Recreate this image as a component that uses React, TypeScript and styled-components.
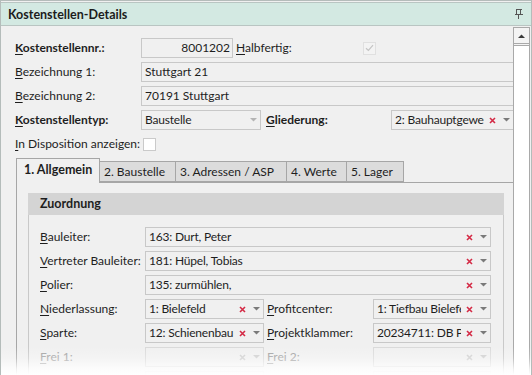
import React from 'react'
import styled, { createGlobalStyle } from 'styled-components'

const GlobalStyle = createGlobalStyle`
  body {
    margin: 0;
    background: #ffffff;
    font-family: Lato, "Noto Sans", "Liberation Sans", sans-serif;
    font-size: 12px;
    color: #1e1e1e;
  }
`

const Panel = styled.div`
  position: relative;
  width: 532px;
  height: 375px;
  box-sizing: border-box;
  border: 1px solid #b4bcba;
  border-bottom: none;
  display: flex;
  flex-direction: column;
  overflow: hidden;
  background: #f0f0f0;
`

const Header = styled.div`
  height: 24px;
  margin-top: 1px;
  flex-shrink: 0;
  box-sizing: border-box;
  background: #d3e9e2;
  border-top: 1px solid #b9c5c2;
  border-bottom: 1px solid #b9c5c2;
  display: flex;
  align-items: center;
  justify-content: space-between;
  padding: 0 8px 0 7px;
`

const Title = styled.div`
  font-weight: 700;
  font-size: 12.5px;
  color: #1c1c1c;
`

const Body = styled.div`
  flex: 1;
  display: flex;
  min-height: 0;
`

const Content = styled.div`
  flex: 1;
  min-width: 0;
  overflow: hidden;
  padding: 12px 0 0 14px;
`

const Scrollbar = styled.div`
  width: 17px;
  margin: 1px 1px 0 0;
  box-sizing: border-box;
  border: 1px solid #a9a9a9;
  border-bottom: none;
  background: #ffffff;
  display: flex;
  flex-direction: column;
`

const ScrollButton = styled.div`
  height: 15px;
  border-bottom: 3px double #a9a9a9;
  background: #f4f4f4;
  display: flex;
  align-items: center;
  justify-content: center;
`

const Row = styled.div<{ $gap?: number }>`
  display: flex;
  align-items: center;
  height: 20px;
  margin-bottom: ${p => p.$gap ?? 4}px;
`

const Label = styled.div<{ $w: number; $bold?: boolean; $disabled?: boolean; $ml?: number }>`
  width: ${p => p.$w}px;
  flex-shrink: 0;
  margin-left: ${p => p.$ml ?? 0}px;
  font-weight: ${p => (p.$bold ? 700 : 400)};
  color: ${p => (p.$disabled ? '#a0a0a0' : '#1e1e1e')};
  white-space: nowrap;
  line-height: 20px;
`

const Key = styled.span`
  text-decoration: underline;
  text-underline-offset: 2px;
`

const Field = styled.div<{ $w?: number; $right?: boolean }>`
  ${p => (p.$w ? `width: ${p.$w}px; flex-shrink: 0;` : 'flex: 1; min-width: 0; margin-right: -3px;')}
  height: 20px;
  box-sizing: border-box;
  border: 1px solid #c8c8c8;
  background: #f0f0f0;
  padding: 0 2px 0 3px;
  line-height: 18px;
  text-align: ${p => (p.$right ? 'right' : 'left')};
  white-space: nowrap;
  overflow: hidden;
`

const ComboBox = styled.div<{ $w?: number; $disabled?: boolean; $bleed?: boolean }>`
  ${p => (p.$w ? `width: ${p.$w}px; flex-shrink: 0;` : 'flex: 1; min-width: 0;')}
  margin-right: ${p => (p.$bleed ? -1 : 0)}px;
  height: 20px;
  box-sizing: border-box;
  border: 1px solid ${p => (p.$disabled ? '#dadada' : '#c8c8c8')};
  background: #f0f0f0;
  display: flex;
  align-items: center;
  padding: 0 0 0 3px;
`

const ComboText = styled.div`
  flex: 1;
  min-width: 0;
  overflow: hidden;
  white-space: nowrap;
  line-height: 18px;
  letter-spacing: -0.2px;
`

const IconSlot = styled.div<{ $w: number }>`
  width: ${p => p.$w}px;
  flex-shrink: 0;
  display: flex;
  align-items: center;
  justify-content: center;
`

const CheckBox = styled.div<{ $disabled?: boolean; $ml?: number }>`
  width: 13px;
  height: 13px;
  margin-left: ${p => p.$ml ?? 0}px;
  box-sizing: border-box;
  border: 1px solid ${p => (p.$disabled ? '#e0e0e0' : '#cacaca')};
  background: ${p => (p.$disabled ? '#f3f3f3' : '#ffffff')};
  display: flex;
  align-items: center;
  justify-content: center;
`

const TabStrip = styled.div`
  display: flex;
  align-items: flex-end;
  height: 24px;
  margin-left: 1px;
`

const Tab = styled.div<{ $active?: boolean; $w: number }>`
  position: relative;
  width: ${p => p.$w}px;
  box-sizing: border-box;
  height: ${p => (p.$active ? 25 : 21)}px;
  margin-bottom: ${p => (p.$active ? -1 : 0)}px;
  margin-left: ${p => (p.$active ? 0 : -1)}px;
  z-index: ${p => (p.$active ? 1 : 0)};
  border: 1px solid #a6a6a6;
  border-bottom: ${p => (p.$active ? 'none' : '1px solid #a6a6a6')};
  background: ${p => (p.$active ? '#f0f0f0' : '#dcdcdc')};
  font-weight: ${p => (p.$active ? 700 : 400)};
  font-size: ${p => (p.$active ? 12.5 : 12)}px;
  padding-left: ${p => (p.$active ? 7 : 4)}px;
  line-height: ${p => (p.$active ? 22 : 19)}px;
  white-space: nowrap;
  &:first-child { margin-left: 0; }
`

const TabPanel = styled.div`
  margin-left: 1px;
  margin-right: -4px;
  border: 1px solid #a6a6a6;
  border-bottom: none;
  padding: 10px 11px 0 11px;
  height: 300px;
`

const Group = styled.div`
  width: 476px;
  box-sizing: border-box;
  border: 1px solid #c9c9c9;
  border-top: none;
`

const GroupHeader = styled.div`
  height: 22px;
  margin: 0 -1px;
  background: #d4d4d4;
  font-weight: 700;
  font-size: 12.5px;
  line-height: 21px;
  padding-left: 12px;
`

const GroupBody = styled.div`
  padding: 12px 12px 0 11px;
`

const Fade = styled.div`
  position: absolute;
  left: 0;
  right: 0;
  bottom: 0;
  height: 28px;
  pointer-events: none;
  background: linear-gradient(
    to bottom,
    rgba(255, 255, 255, 0) 0%,
    rgba(255, 255, 255, 0.25) 40%,
    rgba(255, 255, 255, 0.8) 78%,
    rgba(255, 255, 255, 1) 100%
  );
`

const Pin = () => (
  <svg width="9" height="10" viewBox="0 0 9 10">
    <g stroke="#555" strokeWidth="1" fill="none" shapeRendering="crispEdges">
      <line x1="1.5" y1="0.5" x2="7.5" y2="0.5" />
      <line x1="2.5" y1="0.5" x2="2.5" y2="5.5" />
      <line x1="6.5" y1="0.5" x2="6.5" y2="5.5" />
      <line x1="0.5" y1="5.5" x2="8.5" y2="5.5" />
      <line x1="4.5" y1="5.5" x2="4.5" y2="9.5" />
    </g>
  </svg>
)

const ClearX = ({ disabled }: { disabled?: boolean }) => (
  <svg width="7" height="7" viewBox="0 0 7 7">
    <path d="M1 1 L6 6 M6 1 L1 6" stroke={disabled ? '#cfcfcf' : '#d42a45'} strokeWidth="1.6" />
  </svg>
)

const Arrow = ({ color = '#7a7a7a' }: { color?: string }) => (
  <svg width="7" height="4" viewBox="0 0 7 4">
    <path d="M0 0 H7 L3.5 3.5 Z" fill={color} />
  </svg>
)

const UpArrow = () => (
  <svg width="7" height="4" viewBox="0 0 7 4">
    <path d="M0 4 H7 L3.5 0.5 Z" fill="#3a3a3a" />
  </svg>
)

const Check = () => (
  <svg width="9" height="8" viewBox="0 0 9 8">
    <path d="M1 4.2 L3.4 6.5 L8 1.2" stroke="#c4c4c4" strokeWidth="1.2" fill="none" />
  </svg>
)

type ComboProps = { value?: string; w?: number; disabled?: boolean; clear?: boolean; bleed?: boolean }

const Combo = ({ value = '', w, disabled, clear = true, bleed }: ComboProps) => (
  <ComboBox $w={w} $disabled={disabled} $bleed={bleed}>
    <ComboText>{value}</ComboText>
    {clear && (
      <IconSlot $w={16}>
        <ClearX disabled={disabled} />
      </IconSlot>
    )}
    <IconSlot $w={13}>
      <Arrow color={disabled ? '#cfcfcf' : clear ? '#7a7a7a' : '#b4b4b4'} />
    </IconSlot>
  </ComboBox>
)

const tabs = [
  { label: '1. Allgemein', w: 84 },
  { label: '2. Baustelle', w: 77 },
  { label: '3. Adressen / ASP', w: 112 },
  { label: '4. Werte', w: 61 },
  { label: '5. Lager', w: 58 },
]

export default function App() {
  return (
    <>
      <GlobalStyle />
      <Panel>
        <Header>
          <Title>Kostenstellen-Details</Title>
          <Pin />
        </Header>
        <Body>
          <Content>
            <Row>
              <Label $w={126} $bold><Key>K</Key>ostenstellennr.:</Label>
              <Field $w={92} $right>8001202</Field>
              <Label $w={127} $ml={3}><Key>H</Key>albfertig:</Label>
              <CheckBox $disabled>
                <Check />
              </CheckBox>
            </Row>
            <Row>
              <Label $w={126}><Key>B</Key>ezeichnung 1:</Label>
              <Field>Stuttgart 21</Field>
            </Row>
            <Row>
              <Label $w={126}><Key>B</Key>ezeichnung 2:</Label>
              <Field>70191 Stuttgart</Field>
            </Row>
            <Row>
              <Label $w={126} $bold><Key>K</Key>ostenstellentyp:</Label>
              <Combo value="Baustelle" w={120} clear={false} />
              <Label $w={125} $ml={5} $bold><Key>G</Key>liederung:</Label>
              <Combo value="2: Bauhauptgewerbe" bleed />
            </Row>
            <Row>
              <Label $w={126}><Key>I</Key>n Disposition anzeigen:</Label>
              <CheckBox $ml={2} />
            </Row>

            <TabStrip>
              {tabs.map((t, i) => (
                <Tab key={t.label} $w={t.w} $active={i === 0}>{t.label}</Tab>
              ))}
            </TabStrip>
            <TabPanel>
              <Group>
                <GroupHeader>Zuordnung</GroupHeader>
                <GroupBody>
                  <Row>
                    <Label $w={105}><Key>B</Key>auleiter:</Label>
                    <Combo value="163: Durt, Peter" w={346} />
                  </Row>
                  <Row>
                    <Label $w={105}><Key>V</Key>ertreter Bauleiter:</Label>
                    <Combo value="181: Hüpel, Tobias" w={346} />
                  </Row>
                  <Row>
                    <Label $w={105}><Key>P</Key>olier:</Label>
                    <Combo value="135: zurmühlen," w={346} />
                  </Row>
                  <Row>
                    <Label $w={105}><Key>N</Key>iederlassung:</Label>
                    <Combo value="1: Bielefeld" w={119} />
                    <Label $w={106} $ml={3}><Key>P</Key>rofitcenter:</Label>
                    <Combo value="1: Tiefbau Bielefeld" w={118} />
                  </Row>
                  <Row>
                    <Label $w={105}><Key>S</Key>parte:</Label>
                    <Combo value="12: Schienenbau" w={119} />
                    <Label $w={106} $ml={3}><Key>P</Key>rojektklammer:</Label>
                    <Combo value="20234711: DB Projekt" w={118} />
                  </Row>
                  <Row>
                    <Label $w={105} $disabled><Key>F</Key>rei 1:</Label>
                    <Combo w={119} disabled />
                    <Label $w={106} $ml={3} $disabled><Key>F</Key>rei 2:</Label>
                    <Combo w={118} disabled />
                  </Row>
                  <Row>
                    <Label $w={105} $disabled />
                    <Combo w={119} disabled />
                    <Label $w={106} $ml={3} $disabled />
                    <Combo w={118} disabled />
                  </Row>
                </GroupBody>
              </Group>
            </TabPanel>
          </Content>
          <Scrollbar>
            <ScrollButton>
              <UpArrow />
            </ScrollButton>
          </Scrollbar>
        </Body>
        <Fade />
      </Panel>
    </>
  )
}
